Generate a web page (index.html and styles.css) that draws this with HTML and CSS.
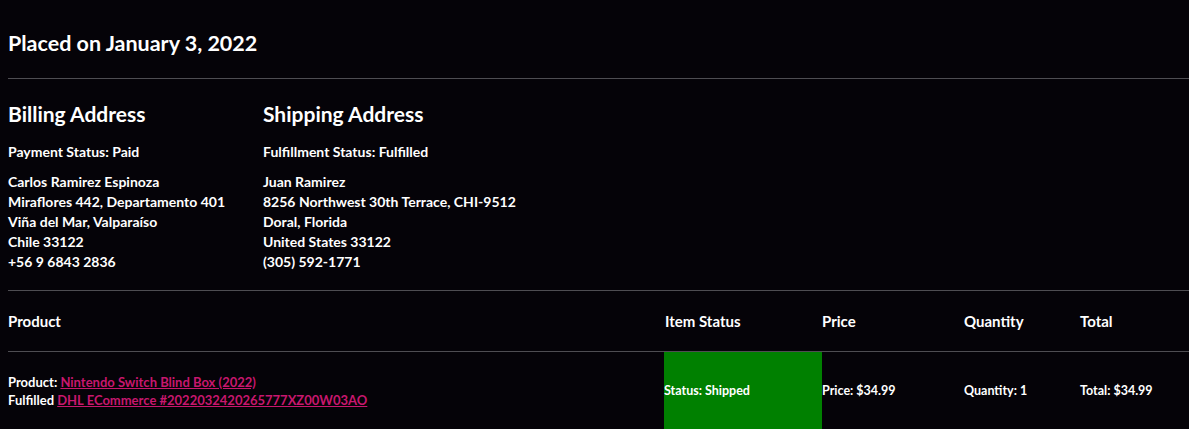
FILE: index.html
```html
<!DOCTYPE html>
<html lang="en">
<head>
<meta charset="utf-8">
<title>Order</title>
<link rel="stylesheet" href="styles.css">
</head>
<body>
<main class="page">
  <h1 class="placed">Placed on January 3, 2022</h1>
  <hr class="rule">
  <section class="addresses">
    <div class="address">
      <h2 class="addr-title">Billing Address</h2>
      <p class="status">Payment Status: Paid</p>
      <p class="lines">Carlos Ramirez Espinoza<br>Miraflores 442, Departamento 401<br>Viña del Mar, Valparaíso<br>Chile 33122<br>+56 9 6843 2836</p>
    </div>
    <div class="address">
      <h2 class="addr-title">Shipping Address</h2>
      <p class="status">Fulfillment Status: Fulfilled</p>
      <p class="lines">Juan Ramirez<br>8256 Northwest 30th Terrace, CHI-9512<br>Doral, Florida<br>United States 33122<br>(305) 592-1771</p>
    </div>
  </section>
  <hr class="rule">
  <table class="items">
    <colgroup>
      <col class="c-product">
      <col class="c-status">
      <col class="c-price">
      <col class="c-qty">
      <col class="c-total">
    </colgroup>
    <thead>
      <tr>
        <th>Product</th>
        <th class="pad">Item Status</th>
        <th>Price</th>
        <th class="pad">Quantity</th>
        <th class="pad">Total</th>
      </tr>
    </thead>
    <tbody>
      <tr>
        <td class="prod">Product: <a href="#">Nintendo Switch Blind Box (2022)</a><br>Fulfilled <a href="#">DHL ECommerce #2022032420265777XZ00W03AO</a></td>
        <td class="shipped">Status: Shipped</td>
        <td>Price: $34.99</td>
        <td class="pad">Quantity: 1</td>
        <td class="pad">Total: $34.99</td>
      </tr>
    </tbody>
  </table>
</main>
</body>
</html>
```
FILE: styles.css
```css
html, body {
  margin: 0;
  background: #050308;
}
body {
  color: #ffffff;
  font-family: "Lato", "Liberation Sans", sans-serif;
}
.page {
  padding-left: 8px;
}
.placed {
  margin: 0;
  padding-top: 30px;
  height: 48px;
  font-size: 21.5px;
  font-weight: 700;
  line-height: 26px;
}
.rule {
  margin: 0;
  border: 0;
  border-top: 1px solid #4e4d52;
  height: 0;
}
.addresses {
  display: grid;
  grid-template-columns: 255px 1fr;
  padding-top: 21px;
  padding-bottom: 18px;
}
.addr-title {
  margin: 0 0 15px;
  font-size: 21px;
  font-weight: 700;
  line-height: 27px;
}
.status {
  margin: 0 0 10px;
  font-size: 14px;
  font-weight: 700;
  line-height: 20px;
}
.lines {
  margin: 0;
  font-size: 14px;
  font-weight: 700;
  line-height: 20px;
}
.items {
  width: 1181px;
  border-collapse: collapse;
  table-layout: fixed;
}
.c-product { width: 656px; }
.c-status { width: 158px; }
.c-price { width: 141px; }
.c-qty { width: 116px; }
.c-total { width: 110px; }
.items th {
  height: 60px;
  padding: 0;
  text-align: left;
  font-size: 15px;
  font-weight: 700;
  border-bottom: 1px solid #4e4d52;
}
.items td {
  height: 77px;
  padding: 0;
  font-size: 12.5px;
  font-weight: 700;
  line-height: 18px;
  border-bottom: 1px solid #4e4d52;
}
.items td.prod {
  font-size: 13px;
}
.items .pad { padding-left: 1px; }
.prod a {
  color: #c8176e;
  text-decoration: underline;
}
.shipped {
  background: #008000;
}
```
